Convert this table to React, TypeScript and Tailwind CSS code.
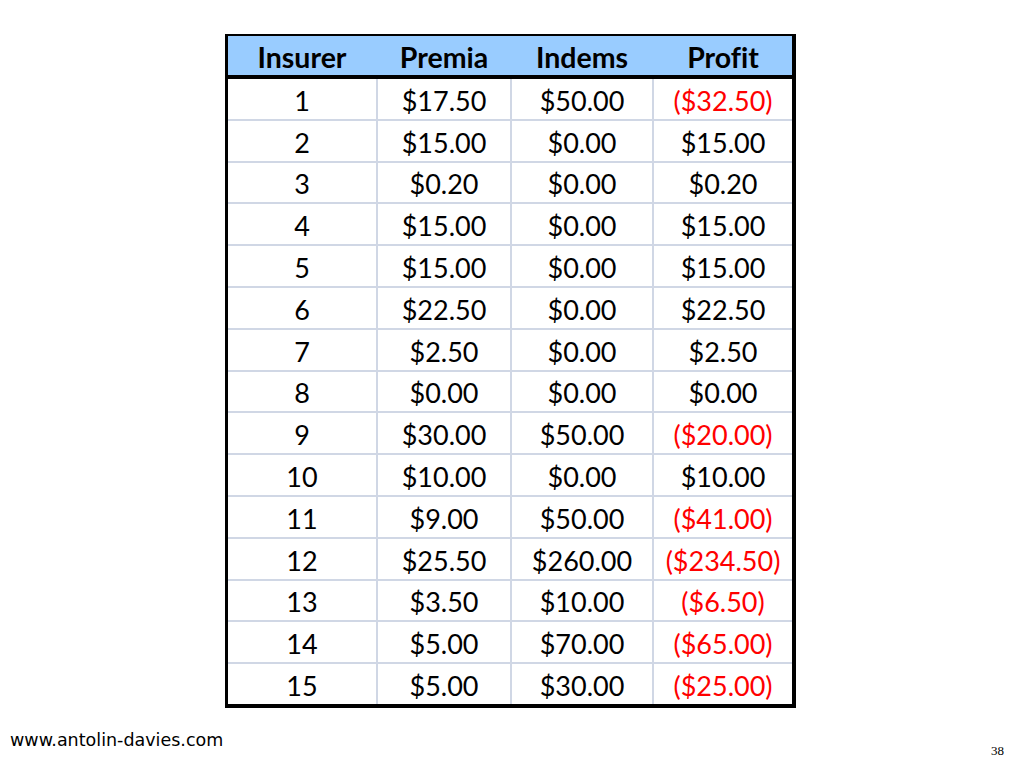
import React from "react";

const rows: [string, string, string, string, boolean][] = [
  ["1", "$17.50", "$50.00", "($32.50)", true],
  ["2", "$15.00", "$0.00", "$15.00", false],
  ["3", "$0.20", "$0.00", "$0.20", false],
  ["4", "$15.00", "$0.00", "$15.00", false],
  ["5", "$15.00", "$0.00", "$15.00", false],
  ["6", "$22.50", "$0.00", "$22.50", false],
  ["7", "$2.50", "$0.00", "$2.50", false],
  ["8", "$0.00", "$0.00", "$0.00", false],
  ["9", "$30.00", "$50.00", "($20.00)", true],
  ["10", "$10.00", "$0.00", "$10.00", false],
  ["11", "$9.00", "$50.00", "($41.00)", true],
  ["12", "$25.50", "$260.00", "($234.50)", true],
  ["13", "$3.50", "$10.00", "($6.50)", true],
  ["14", "$5.00", "$70.00", "($65.00)", true],
  ["15", "$5.00", "$30.00", "($25.00)", true],
];

const cols = "grid grid-cols-[148px_132px_140px_138px] gap-x-[2px]";

export default function App() {
  return (
    <div className="w-[1024px] h-[768px] bg-white flex flex-col [font-variant-ligatures:none]" style={{ fontFamily: "Lato, 'Open Sans', sans-serif" }}>
      <div className="mt-[34px] ml-[225px] w-[571px] border-l-[3px] border-t-[2px] border-r-[4px] border-b-[4px] border-black">
        <div className={`${cols} h-[43px] bg-[#99ccff] border-b-4 border-black`}>
          {["Insurer", "Premia", "Indems", "Profit"].map((h) => (
            <div key={h} className="flex items-center justify-center text-[28.5px] font-bold text-black leading-none pt-[3px]">
              {h}
            </div>
          ))}
        </div>
        <div className="flex flex-col gap-y-[2px] bg-[#d0d7e5]">
          {rows.map((r) => (
            <div key={r[0]} className={`${cols} h-[39.8px]`}>
              {[r[0], r[1], r[2]].map((c, i) => (
                <div key={i} className="bg-white flex items-center justify-center text-[27px] text-black leading-none pt-[3px]">
                  {c}
                </div>
              ))}
              <div className={`bg-white flex items-center justify-center text-[27px] leading-none pt-[3px] ${r[4] ? "text-[#ff0000]" : "text-black"}`}>
                {r[3]}
              </div>
            </div>
          ))}
        </div>
      </div>
      <div className="flex justify-between items-end pl-[10px] pr-[20px] mt-[24px]">
        <div className="text-[17.5px] text-black leading-none" style={{ fontFamily: "'DejaVu Sans', sans-serif" }}>
          www.antolin-davies.com
        </div>
        <div className="text-[13px] text-black leading-none mb-[-8px]" style={{ fontFamily: "'Liberation Serif', serif" }}>
          38
        </div>
      </div>
    </div>
  );
}
